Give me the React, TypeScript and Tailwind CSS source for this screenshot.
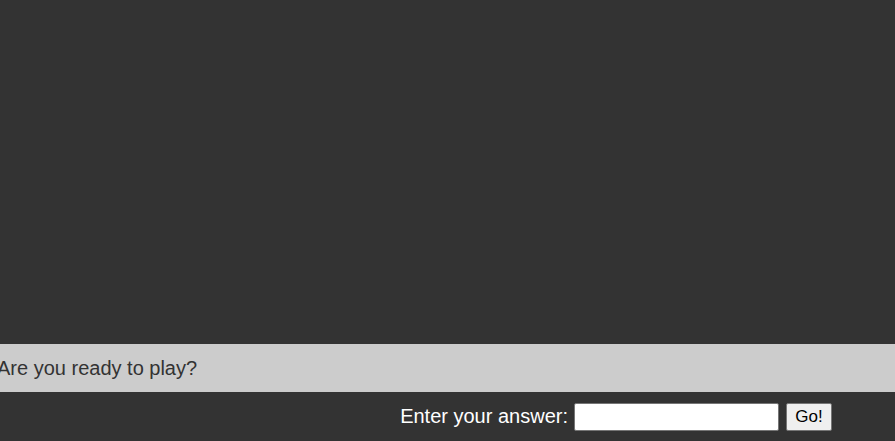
export default function App() {
  return (
    <div className="flex h-[441px] w-full flex-col overflow-hidden bg-[#333333] font-['Liberation_Sans',Arial,sans-serif]">
      {/* Game area */}
      <div className="flex-1" />

      {/* Message bar */}
      <div className="flex h-[48px] items-center bg-[#cccccc]">
        <p className="-ml-[3px] text-[20px] leading-[23px] text-[#333333]">Are you ready to play?</p>
      </div>

      {/* Answer row */}
      <div className="flex h-[49px] items-center justify-end pr-[63px]">
        <label className="text-[20px] leading-[23px] text-white">Enter your answer:</label>
        <input
          type="text"
          className="ml-[6px] h-[28px] w-[205px] rounded-[2px] border border-[#767676] bg-white px-1 text-[16px] outline-none"
        />
        <button className="ml-[7px] h-[28px] w-[46px] rounded-[2px] border border-[#767676] bg-[#efefef] text-[17px] leading-none text-black">
          Go!
        </button>
      </div>
    </div>
  );
}
